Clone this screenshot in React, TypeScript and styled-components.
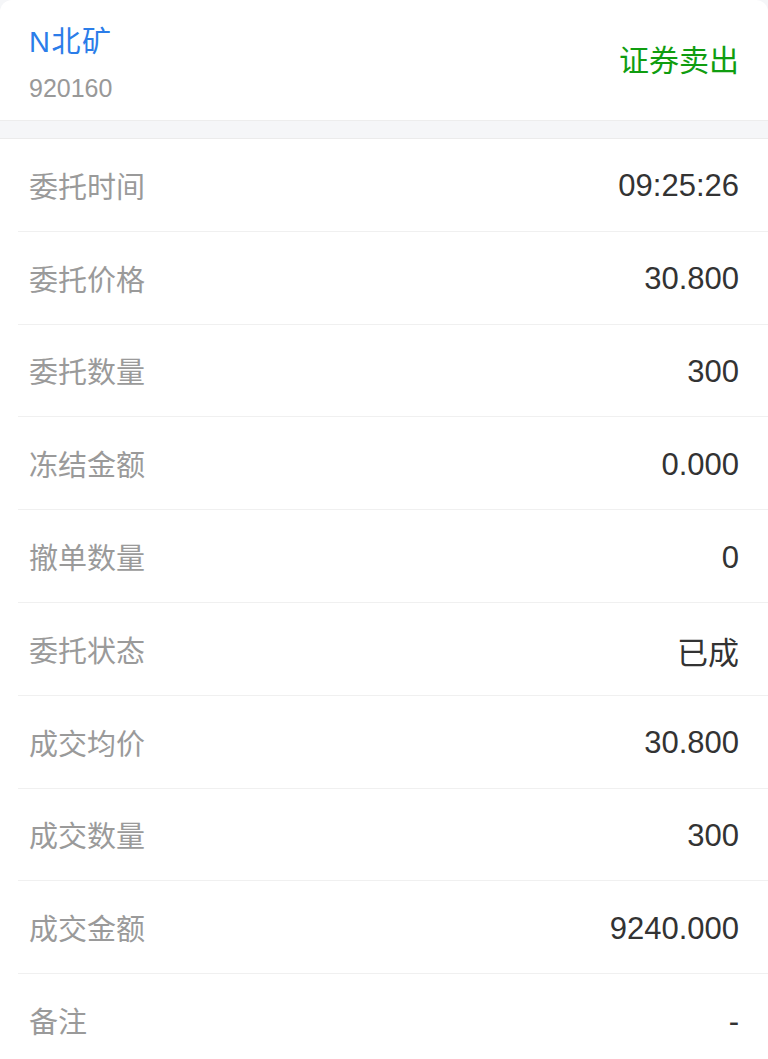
import React from "react";
import styled, { createGlobalStyle } from "styled-components";

const GlobalStyle = createGlobalStyle`
    html, body {
        margin: 0;
        padding: 0;
        background: #f5f6f8;
        font-family: "Liberation Sans", "Noto Sans CJK SC", sans-serif;
    }
`;

interface Detail {
    label: string;
    value: string;
}

const details: Detail[] = [
    { label: "委托时间", value: "09:25:26" },
    { label: "委托价格", value: "30.800" },
    { label: "委托数量", value: "300" },
    { label: "冻结金额", value: "0.000" },
    { label: "撤单数量", value: "0" },
    { label: "委托状态", value: "已成" },
    { label: "成交均价", value: "30.800" },
    { label: "成交数量", value: "300" },
    { label: "成交金额", value: "9240.000" },
    { label: "备注", value: "-" },
];

export default function App() {
    return (
        <>
            <GlobalStyle />
            <Page>
                <Header>
                    <StockInfo>
                        <StockName>N北矿</StockName>
                        <StockCode>920160</StockCode>
                    </StockInfo>
                    <TradeType>证券卖出</TradeType>
                </Header>
                <Gap />
                <DetailList>
                    {details.map((item) => (
                        <DetailRow key={item.label}>
                            <Label>{item.label}</Label>
                            <Value>{item.value}</Value>
                        </DetailRow>
                    ))}
                </DetailList>
            </Page>
        </>
    );
}

const Page = styled.div`
    width: 768px;
    height: 1059px;
    overflow: hidden;
`;

const Header = styled.header`
    display: flex;
    justify-content: space-between;
    align-items: center;
    height: 121px;
    box-sizing: border-box;
    padding: 0 29px;
    background: #fff;
    border-radius: 12px 12px 0 0;
    border-bottom: 1px solid #ededed;
`;

const StockInfo = styled.div`
    display: flex;
    flex-direction: column;
    gap: 14px;
    margin-top: 7px;
`;

const StockName = styled.div`
    font-size: 29px;
    line-height: 34px;
    letter-spacing: 1.5px;
    color: #2b7de9;
`;

const StockCode = styled.div`
    font-size: 25px;
    line-height: 30px;
    color: #999;
`;

const TradeType = styled.div`
    font-size: 30px;
    line-height: 36px;
    color: #109d10;
    margin-top: 2px;
`;

const Gap = styled.div`
    height: 17px;
    background: #f5f6f8;
    border-bottom: 1px solid #ebebeb;
`;

const DetailList = styled.div`
    background: #fff;
    padding-left: 18px;
`;

const DetailRow = styled.div`
    display: flex;
    justify-content: space-between;
    align-items: center;
    height: 91.8px;
    padding: 0 29px 0 11px;
    border-bottom: 1px solid #f0f0f0;

    &:last-child {
        border-bottom: none;
    }
`;

const Label = styled.span`
    font-size: 29px;
    color: #9a9a9a;
`;

const Value = styled.span`
    font-size: 31px;
    color: #333;
    padding-top: 3px;
`;
